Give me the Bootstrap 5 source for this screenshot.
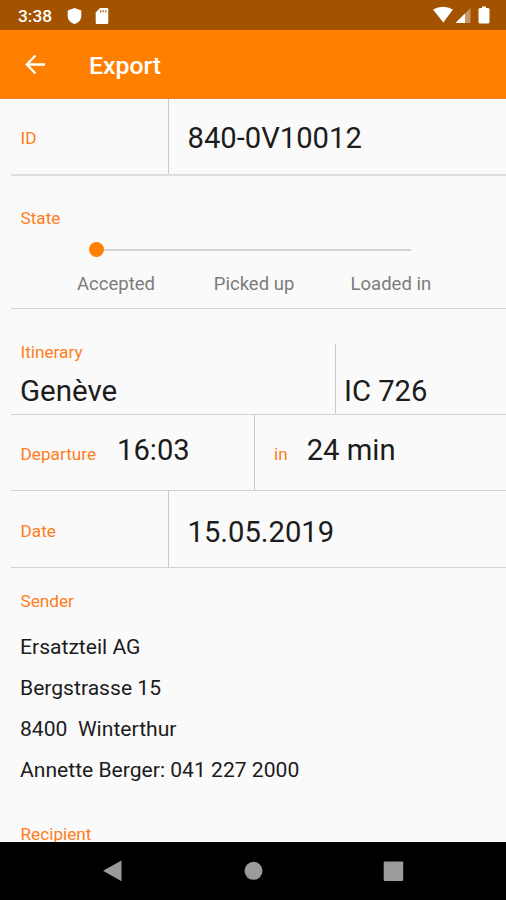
<!DOCTYPE html>
<html lang="en">
<head>
<meta charset="utf-8">
<meta name="viewport" content="width=device-width, initial-scale=1">
<title>Export</title>
<link href="https://cdn.jsdelivr.net/npm/bootstrap@5.3.0/dist/css/bootstrap.min.css" rel="stylesheet">
<style>
body{font-family:Roboto,"Liberation Sans",sans-serif;background:#fafafa;color:#1c1c1c}
.screen{width:506px;height:900px}
.status{height:30px;background:#a35200;padding:2px 16px 0 18px}
.clock{font-size:17.3px;font-weight:500;line-height:28px;width:49px}
.sdcard{margin-left:13px}
.appbar{height:69px;background:#ff8000;padding:0 25px;border-bottom:1px solid #ee8324}
.appbar h1{font-size:24.8px;font-weight:500;line-height:30px;margin-left:43px;padding-top:4px}
.content{padding-left:11px}
.rule{border-bottom:1.5px solid #d2d2d2}
.vline{border-left:1px solid #cacaca}
.label{font-size:17.2px;line-height:20px;color:#ff7d1a;padding-left:9.5px}
.value{font-size:29.2px;line-height:34px;white-space:nowrap}
.key{width:157px}
.entry{padding:3px 0 0 18.5px}
.id-row{height:77px;border-bottom:2px solid #dedede}
.id-row .label{padding-top:2px}
.state-row{height:133px;padding-top:32px}
.track{height:15px;margin:14px 95px 0 78px}
.dot{width:15px;height:15px;background:#ff8000}
.bar{height:2px;background:#d2d2d2}
.steps{font-size:18.5px;line-height:22px;color:#7c7c7c;padding-left:66px;margin-top:16px}
.steps span{width:136.8px}
.itin-row{height:106px;padding-top:35px}
.from{width:324px}
.from .label{margin-top:-2px}
.from .value{padding-left:9px;margin-top:12px;font-size:29.5px}
.train{padding:0 0 6px 8px}
.dep-row{height:76px}
.dep{width:243px;padding-top:18px}
.dep .value{margin-left:21px}
.remain{padding-top:18px}
.remain .label{padding-left:19px}
.remain .value{margin-left:19px}
.date-row{height:77px}
.date-row .label{padding-top:4px}
.date-row .entry{padding-top:5px}
.sender{padding-top:23px}
.lines{font-size:21.1px;line-height:41px;padding:15px 0 0 9px;white-space:pre}
.recipient{padding-top:34px}
.navkeys{height:58px;background:#000}
</style>
<script src="https://cdn.jsdelivr.net/npm/bootstrap@5.3.0/dist/js/bootstrap.bundle.min.js"></script>
</head>
<body>
<div class="screen d-flex flex-column overflow-hidden">
  <header class="status d-flex align-items-center text-white flex-shrink-0">
    <span class="clock">3:38</span>
    <svg width="15" height="18" viewBox="0 0 15 18" fill="#fff"><path d="M7.5 1 14.3 3.6V9c0 4-3 7-6.8 8C3.700 16 .7 13 .7 9V3.600Z"/></svg>
    <svg class="sdcard" width="14" height="18" viewBox="0 0 14 18" fill="#fff"><path d="M5 1H12q1.300 0 1.300 1.300V15.700Q13.300 17 12 17H2Q.7 17 .7 15.700V5.500Z"/><path d="M5 3h1.300v2.500H5zM7.500 3h1.300v2.500H7.500zM10 3h1.300v2.500H10z" fill="#b97a45"/></svg>
    <svg class="ms-auto" width="57" height="20" viewBox="433 6 57 20" fill="#fff"><path d="M433 9.500Q443 4 453 9.500L443.300 22.500Z"/><path d="M455.500 23 470.500 8V23Z" opacity=".4"/><path d="M455.500 23 465 13.500V23Z"/><path d="M482 6.500h4v1.500h2q1.500 0 1.500 1.500v12.500q0 1.500-1.500 1.500h-8q-1.500 0-1.500-1.500v-12.500q0-1.500 1.500-1.500h2z"/></svg>
  </header>
  <nav class="appbar d-flex align-items-center text-white flex-shrink-0">
    <svg width="21" height="20" viewBox="0 0 21 20" fill="none" stroke="#fff" stroke-width="2.300"><path d="M20 10.500H2.200M10.500 1.500 1.800 10.500l8.700 9"/></svg>
    <h1 class="mb-0">Export</h1>
  </nav>
  <main class="content flex-grow-1 overflow-hidden">
    <section class="id-row d-flex">
      <div class="key d-flex align-items-center label">ID</div>
      <div class="vline entry d-flex align-items-center value">840-0V10012</div>
    </section>
    <section class="state-row rule">
      <div class="label">State</div>
      <div class="track d-flex align-items-center"><span class="dot rounded-circle"></span><span class="bar flex-grow-1"></span></div>
      <div class="steps d-flex"><span>Accepted</span><span>Picked up</span><span>Loaded in</span></div>
    </section>
    <section class="itin-row rule d-flex">
      <div class="from"><div class="label">Itinerary</div><div class="value">Genève</div></div>
      <div class="train vline d-flex align-items-end value">IC 726</div>
    </section>
    <section class="dep-row rule d-flex">
      <div class="dep d-flex align-items-baseline"><span class="label">Departure</span><span class="value">16:03</span></div>
      <div class="remain vline d-flex align-items-baseline"><span class="label">in</span><span class="value">24 min</span></div>
    </section>
    <section class="date-row rule d-flex">
      <div class="key d-flex align-items-center label">Date</div>
      <div class="vline entry d-flex align-items-center value">15.05.2019</div>
    </section>
    <section class="sender">
      <div class="label">Sender</div>
      <div class="lines"><div>Ersatzteil AG</div><div>Bergstrasse 15</div><div>8400  Winterthur</div><div>Annette Berger: 041 227 2000</div></div>
    </section>
    <section class="recipient label">Recipient</section>
  </main>
  <footer class="navkeys flex-shrink-0">
    <svg class="d-block" width="506" height="58" viewBox="0 842 506 58" fill="#9b9b9b"><path d="M103 870.800 121.500 860.500V881.300Z"/><circle cx="253.500" cy="870.800" r="9"/><rect x="383.700" y="861.500" width="19.500" height="19.500" rx="1"/></svg>
  </footer>
</div>
</body>
</html>
